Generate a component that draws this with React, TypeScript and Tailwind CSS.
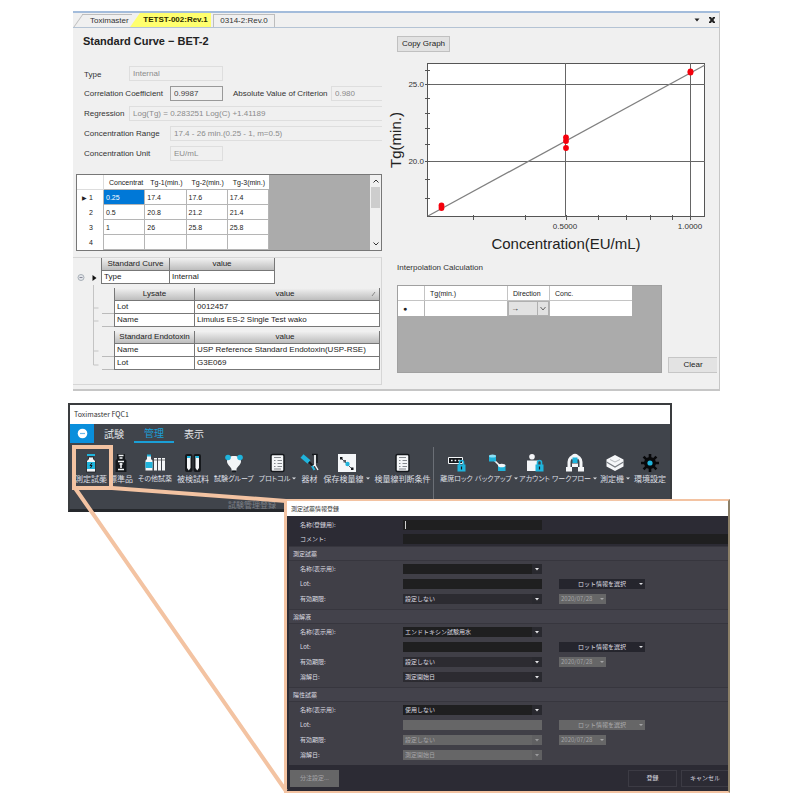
import type { ReactNode } from "react";

const WHITE = "#f4f6f8";
const CYAN = "#1fb4dc";
const BLACK = "#15181c";

/* ---------- Standard curve window ---------- */

function DocumentTabs() {
  return (
    <div className="flex h-[15px] items-end border-b border-[#b4c3d4] pl-[9px] text-[8px] leading-none">
      <button className="relative h-[13px] w-[50px] border-t border-[#bdbdbd] text-left text-[#333] before:absolute before:-left-1 before:-top-px before:h-[13px] before:w-2 before:-skew-x-[35deg] before:border-l before:border-t before:border-[#bdbdbd]">
        <span className="pl-2">Toximaster</span>
      </button>
      <button className="relative ml-2 h-[14px] w-[71px] bg-[#ffff6e] text-center font-bold text-[#2b2b00] before:absolute before:-left-[5px] before:top-0 before:h-[14px] before:w-[10px] before:-skew-x-[35deg] before:bg-[#ffff6e]">
        <span className="relative">TETST-002:Rev.1</span>
      </button>
      <button className="ml-0.5 h-[13px] w-[62px] border border-b-0 border-[#bdbdbd] text-[#333]">
        0314-2:Rev.0
      </button>
      <div className="flex-1" />
      <div className="flex h-full items-center gap-2 pr-[3px]">
        <button aria-label="Tab list">
          <svg width="6" height="4" viewBox="0 0 6 4">
            <path d="M0.5 0.5h5L3 3.5z" fill="#222" />
          </svg>
        </button>
        <button aria-label="Close tab">
          <svg width="8" height="8" viewBox="0 0 8 8">
            <path d="M1 1h2l1 1.6L5 1h2v1L5.4 4 7 6v1H5L4 5.4 3 7H1V6l1.6-2L1 2z" fill="#222" />
          </svg>
        </button>
      </div>
    </div>
  );
}

const field =
  "h-[15px] min-w-0 border border-[#dedede] bg-[#f0f0f0] px-[3px] text-[8px] leading-none text-[#8b8b8b] outline-none";

function CurveForm() {
  return (
    <div className="mt-3 pl-[11px] text-[8px] leading-none text-[#333]">
      <div className="flex h-5 items-center">
        <label htmlFor="type" className="w-[45px] pt-1">Type</label>
        <input id="type" readOnly defaultValue="Internal" className={`${field} w-[94px]`} />
      </div>
      <div className="flex h-5 items-center">
        <label htmlFor="coef" className="w-[86px] pt-0.5">Correlation Coefficient</label>
        <input
          id="coef"
          readOnly
          defaultValue="0.9987"
          className="h-[15px] w-[53px] border border-[#999] bg-[#f0f0f0] px-[3px] text-[8px] leading-none text-[#444] outline-none"
        />
        <label htmlFor="crit" className="w-[108px] flex-none whitespace-nowrap pl-[10px] pt-0.5">
          Absolute Value of Criterion
        </label>
        <input id="crit" readOnly defaultValue="0.980" className={`${field} flex-1 border-r-0`} />
      </div>
      <div className="flex h-5 items-center">
        <label htmlFor="reg" className="w-[45px] pt-0.5">Regression</label>
        <input
          id="reg"
          readOnly
          defaultValue="Log(Tg) = 0.283251 Log(C) +1.41189"
          className={`${field} flex-1 border-r-0`}
        />
      </div>
      <div className="flex h-5 items-center">
        <label htmlFor="range" className="w-[86px] pt-0.5">Concentration Range</label>
        <input
          id="range"
          readOnly
          defaultValue="17.4 - 26 min.(0.25 - 1, m=0.5)"
          className={`${field} flex-1 border-r-0`}
        />
      </div>
      <div className="flex h-5 items-center">
        <label htmlFor="unit" className="w-[86px] pt-0.5">Concentration Unit</label>
        <input id="unit" readOnly defaultValue="EU/mL" className={`${field} w-[53px]`} />
      </div>
    </div>
  );
}

const measurements = [
  ["0.25", "17.4", "17.6", "17.4"],
  ["0.5", "20.8", "21.2", "21.4"],
  ["1", "26", "25.8", "25.8"],
  ["", "", "", ""],
];

function MeasurementGrid() {
  return (
    <div className="ml-[3px] mt-[11px] flex h-[77px] border border-[#777] bg-[#ababab]">
      <table className="w-[192px] flex-none table-fixed border-separate border-spacing-0 bg-white text-[7px] leading-none text-[#222]">
        <thead>
          <tr>
            <th className="h-[15px] w-[27px] border-b border-r border-[#ddd] p-0" />
            {["Concentrat", "Tg-1(min.)", "Tg-2(min.)", "Tg-3(min.)"].map((h) => (
              <th
                key={h}
                className="h-[15px] overflow-hidden whitespace-nowrap border-b border-[#b5b5b5] p-0 pl-[5px] text-left font-normal"
              >
                {h}
              </th>
            ))}
          </tr>
        </thead>
        <tbody>
          {measurements.map((row, r) => (
            <tr key={r}>
              <td className="h-[15px] border-r border-[#b5b5b5] p-0">
                <span className="flex items-center">
                  <span className="w-3 pl-[5px] text-[6px]">{r === 0 && "▶"}</span>
                  {r + 1}
                </span>
              </td>
              {row.map((v, c) => (
                <td
                  key={c}
                  className={`h-[15px] border-b border-r border-[#b5b5b5] p-0 pl-0.5 ${
                    r === 0 && c === 0 ? "bg-[#0078d7] text-white" : ""
                  }`}
                >
                  {v}
                </td>
              ))}
            </tr>
          ))}
        </tbody>
      </table>
      <div className="flex-1" />
      <div className="flex w-[11px] flex-col items-center bg-[#f0f0f0] py-1">
        <svg className="flex-none" width="6" height="4" viewBox="0 0 6 4">
          <path d="M0.5 3.5 3 1l2.5 2.5" fill="none" stroke="#333" />
        </svg>
        <div className="mt-1 h-[21px] w-[9px] flex-none bg-[#cdcdcd]" />
        <div className="flex-1" />
        <svg className="flex-none" width="6" height="4" viewBox="0 0 6 4">
          <path d="M0.5 0.5 3 3l2.5-2.5" fill="none" stroke="#333" />
        </svg>
      </div>
    </div>
  );
}

const th =
  "h-[13px] border-b border-r border-[#777] bg-linear-to-b from-[#f2f2f2] to-[#bdbdbd] p-0 text-center font-normal";
const td = "h-[13px] border-b border-r border-[#777] bg-white p-0 pl-0.5 whitespace-nowrap";

function DetailTable({ name, rows, sorted }: { name: string; rows: string[][]; sorted?: boolean }) {
  return (
    <div className="ml-[29px] mt-1 flex">
      <div className="mt-[13px] w-3 border-b border-[#bbb]">
        <div className="h-[13px] border-b border-[#bbb]" />
      </div>
      <table className="flex-1 table-fixed border-separate border-spacing-0 border-l border-[#777]">
        <thead>
          <tr>
            <th className={`${th} w-[80px]`}>{name}</th>
            <th className={th}>
              <span className="flex items-center">
                <span className="flex-1 pl-1">value</span>
                <svg width="8" height="6" viewBox="0 0 8 6">
                  {sorted && <path d="m1 5 3-4" stroke="#888" />}
                </svg>
              </span>
            </th>
          </tr>
        </thead>
        <tbody>
          {rows.map(([k, v]) => (
            <tr key={k}>
              <td className={td}>{k}</td>
              <td className={td}>{v}</td>
            </tr>
          ))}
        </tbody>
      </table>
    </div>
  );
}

function DetailTree() {
  return (
    <div className="relative mt-1.5 h-[128px] border border-l-0 border-[#d6d6d6] pr-px text-[8px] leading-none text-[#222]">
      <svg className="absolute left-0 top-0" width="30" height="120" viewBox="0 0 30 120">
        <circle cx="8" cy="19.5" r="3" fill="#e3e6ea" stroke="#a9b0b8" />
        <path d="M6.5 19.5h3" stroke="#889" />
        <path d="M19.5 17v6l4-3z" fill="#111" />
        <path d="M20.5 27v80M20.5 50h5M20.5 63h5M20.5 93h5M20.5 107h5" fill="none" stroke="#c4c4c4" />
      </svg>
      <table className="ml-[28px] w-[174px] table-fixed border-separate border-spacing-0 border-l border-[#777]">
        <thead>
          <tr>
            <th className={`${th} w-[68px]`}>Standard Curve</th>
            <th className={th}>value</th>
          </tr>
        </thead>
        <tbody>
          <tr>
            <td className={td}>Type</td>
            <td className={td}>Internal</td>
          </tr>
        </tbody>
      </table>
      <DetailTable
        name="Lysate"
        sorted
        rows={[
          ["Lot", "0012457"],
          ["Name", "Limulus ES-2 Single Test wako"],
        ]}
      />
      <DetailTable
        name="Standard Endotoxin"
        rows={[
          ["Name", "USP Reference Standard Endotoxin(USP-RSE)"],
          ["Lot", "G3E069"],
        ]}
      />
    </div>
  );
}

const yTicks = [14, 28, 42, 57, 72, 88, 105, 123, 142];
const xTicks = [89, 141, 182, 214, 242, 266, 288, 306];
const points = [
  [57.5, 149.5],
  [57.5, 152],
  [182, 81.5],
  [182, 85],
  [182, 92],
  [306.5, 15.5],
  [306.5, 16.5],
];

function CurveChart() {
  return (
    <svg className="mt-1 h-[200px] w-[336px]" viewBox="0 0 336 200" fontFamily="Liberation Sans, sans-serif">
      <rect x="43.5" y="7.5" width="277" height="153" fill="#fff" stroke="#555" />
      <path d="M43 28.5h278M43 105.5h278M181.5 7v154M306.5 7v154" stroke="#666" fill="none" />
      {yTicks.map((y) => (
        <path key={y} d={`M41 ${y + 0.5}h5`} stroke="#555" />
      ))}
      {xTicks.map((x) => (
        <path key={x} d={`M${x + 0.5} 159v5`} stroke="#555" />
      ))}
      <path d="M44 160 321 9" stroke="#808080" strokeWidth="1.3" />
      {points.map(([x, y], i) => (
        <circle key={i} cx={x} cy={y} r="2.9" fill="#f5000c" />
      ))}
      <g fontSize="8" fill="#333">
        <text x="40" y="31" textAnchor="end">25.0</text>
        <text x="40" y="108" textAnchor="end">20.0</text>
        <text x="181" y="173" textAnchor="middle">0.5000</text>
        <text x="306" y="173" textAnchor="middle">1.0000</text>
      </g>
      <g fontSize="15" fill="#222" textAnchor="middle">
        <text x="182" y="193">Concentration(EU/mL)</text>
        <text transform="translate(17 84) rotate(-90)">Tg(min.)</text>
      </g>
    </svg>
  );
}

function Interpolation() {
  return (
    <>
      <h2 className="ml-[13px] mt-1.5 h-3 text-[8px] leading-3 text-[#333]">Interpolation Calculation</h2>
      <div className="ml-[13px] mt-[11px] flex items-end gap-1.5">
        <div className="h-[88px] w-[265px] border border-[#a0a0a0] bg-[#ababab]">
          <table className="w-[234px] table-fixed border-separate border-spacing-0 bg-white text-[7px] leading-none text-[#222]">
            <thead>
              <tr>
                <th className="h-[15px] w-[27px] border-b border-r border-[#c4c4c4] p-0" />
                <th className="w-[83px] border-b border-r border-[#c4c4c4] p-0 pl-[5px] text-left font-normal">Tg(min.)</th>
                <th className="w-[42px] border-b border-r border-[#c4c4c4] p-0 pl-[5px] text-left font-normal">Direction</th>
                <th className="border-b border-[#c4c4c4] p-0 pl-[5px] text-left font-normal">Conc.</th>
              </tr>
            </thead>
            <tbody>
              <tr>
                <td className="h-[15px] border-r border-[#b5b5b5] p-0 pl-[5px]">●</td>
                <td className="border-r border-[#b5b5b5] p-0" />
                <td className="border-r border-[#b5b5b5] p-0">
                  <span className="relative block">
                    <select
                      aria-label="Direction"
                      className="block h-[15px] w-full appearance-none border border-[#b0b0b0] bg-[#e2e2e2] pl-0.5 text-[8px] leading-none"
                    >
                      <option>→</option>
                    </select>
                    <svg className="pointer-events-none absolute right-0 top-0" width="12" height="15" viewBox="0 0 12 15">
                      <path d="M0.5 1v13" stroke="#b0b0b0" />
                      <path d="m3.5 6 2.5 3 2.5-3" fill="none" stroke="#666" />
                    </svg>
                  </span>
                </td>
                <td className="p-0" />
              </tr>
            </tbody>
          </table>
        </div>
        <button className="h-4 w-[49px] border border-r-0 border-[#c6c6c6] bg-[#e3e3e3] text-[8px] leading-none text-[#222]">
          Clear
        </button>
      </div>
    </>
  );
}

function StandardCurveWindow() {
  return (
    <section className="ml-[73px] mr-[80px] border-b-2 border-r border-t-2 border-b-[#c6c6c6] border-r-[#c6c6c6] border-t-[#a3bcdb] bg-[#f0f0f0] font-['Liberation_Sans',sans-serif]">
      <DocumentTabs />
      <div className="flex pb-1">
        <div className="w-[309px] flex-none">
          <h1 className="mt-[3px] h-5 pl-[10px] text-[11px] font-bold leading-5 text-[#222]">
            Standard Curve − BET-2
          </h1>
          <CurveForm />
          <MeasurementGrid />
          <DetailTree />
        </div>
        <div className="ml-0.5 min-w-0 flex-1">
          <button className="ml-[13px] mt-2 block h-4 w-[53px] border border-[#c0c0c0] bg-[#e2e2e2] text-[8px] leading-none text-[#222]">
            Copy Graph
          </button>
          <CurveChart />
          <Interpolation />
        </div>
      </div>
    </section>
  );
}

/* ---------- Ribbon ---------- */

function Icon({ children }: { children: ReactNode }) {
  return (
    <svg width="20" height="20" viewBox="0 0 20 20" fill="none">
      {children}
    </svg>
  );
}

const lock = (
  <>
    <path d="M12.5 12V9.5a2 2 0 0 1 4 0V12" stroke={CYAN} strokeWidth="1.6" />
    <rect x="10.5" y="11.5" width="8" height="7" fill={CYAN} />
    <path d="M14.5 13.5v3" stroke={BLACK} strokeWidth="1.2" />
  </>
);

const protocol = (
  <>
    <rect x="3" y="1.5" width="13" height="17" rx="1.5" fill={WHITE} stroke={BLACK} strokeWidth="1.5" />
    <path d="M6 4.5h7M6 7.5h1.5M9.5 7.5H14M6 10.5h1.5M9.5 10.5H14M6 13.5h1.5M9.5 13.5H14M6 16h7" stroke="#85898e" />
  </>
);

const icons: Record<string, ReactNode> = {
  reagent: (
    <>
      <path d="M6 2h8" stroke={CYAN} strokeWidth="2" />
      <path d="M7.5 4h5v2l2 2v11h-9V8l2-2z" fill={WHITE} stroke={BLACK} strokeWidth="0.8" />
      <path d="M6 9h8v7H6z" fill={CYAN} />
      <path d="m11 10-2 2.5h2l-1.5 2.5" stroke={BLACK} />
    </>
  ),
  standard: (
    <>
      <path d="M6 1h8v5l1.5 1.5V19h-11V7.5L6 6z" fill={BLACK} />
      <path d="M7.5 2.5h5M8.5 5h3M7 8.5h6M8.5 11h3M10 10v5M7 16.5h6" stroke={WHITE} strokeWidth="1.6" />
    </>
  ),
  others: (
    <>
      <path d="M2 3h4v3l1.5 1.5v10h-7v-10L2 6z" fill={WHITE} />
      <path d="M2 2.5h4" stroke={CYAN} strokeWidth="2" />
      <path d="M0.5 9h7v6h-7z" fill={CYAN} />
      <path d="M9 5h3v12.5H9zM13 5h3v12.5h-3zM17 5h3v12.5h-3z" fill={WHITE} />
      <path d="M9 7h3M13 7h3M17 7h3" stroke="#777" />
    </>
  ),
  samples: (
    <>
      <rect x="2" y="1" width="7.5" height="18" rx="2" fill={BLACK} />
      <rect x="10.5" y="1" width="7.5" height="18" rx="2" fill={BLACK} />
      <path d="M4 3h3.5v12L5.8 17.5 4 15zM12.5 3H16v12l-1.8 2.5-1.7-2.5z" fill={WHITE} />
      <path d="M4 3h3.5v2H4zM12.5 3H16v2h-3.5z" fill={CYAN} />
    </>
  ),
  group: (
    <>
      <path d="M2 6h16M5 9l5 8 5-8" stroke={BLACK} strokeWidth="2" />
      <path d="M10 3c4 0 7 2 7 5.5 0 3-3.5 5-4.5 7.5v1.5h-5V16C6.500 13.500 3 11.500 3 8.500 3 5 6 3 10 3z" fill={WHITE} />
      <circle cx="4" cy="4.5" r="2.8" fill={CYAN} />
      <circle cx="16" cy="4.5" r="2.8" fill={CYAN} />
      <path d="M8 18.500h4" stroke={BLACK} strokeWidth="1.5" />
    </>
  ),
  protocol,
  criteria: protocol,
  tools: (
    <>
      <path d="m2 3 7 6" stroke={CYAN} strokeWidth="4.5" />
      <path d="m9 9 5 5" stroke={BLACK} strokeWidth="2" />
      <path d="M12 1.500h5V10" stroke={BLACK} strokeWidth="1.5" />
      <path d="M15 2v10" stroke={WHITE} strokeWidth="1.8" />
      <path d="m12 14 3-2 3 5" stroke={WHITE} strokeWidth="1.4" />
      <path d="m12 13 2.500 4" stroke={CYAN} strokeWidth="2" />
    </>
  ),
  curve: (
    <>
      <rect x="1" y="1" width="18" height="18" fill={WHITE} />
      <path d="m3 4 13 13" stroke="#555b62" />
      <rect x="3" y="4" width="2.500" height="2.500" fill={BLACK} />
      <rect x="6.500" y="7" width="2.500" height="2.500" fill="#555b62" />
      <circle cx="10.500" cy="11" r="2.200" fill={CYAN} />
      <rect x="14" y="14.500" width="2.500" height="2.500" fill={BLACK} />
    </>
  ),
  screenLock: (
    <>
      <path d="M1.500 4.500h14v6h-14z" fill={BLACK} stroke={WHITE} />
      <path d="M4 7.500h1.600M7.600 7.500h1.600M11.200 7.500h1.600" stroke={WHITE} strokeWidth="1.6" />
      {lock}
    </>
  ),
  backup: (
    <>
      <path d="m7 7 7 7" stroke={WHITE} strokeWidth="1.6" />
      <path d="M2 2.500h7v6H2zM11 12h7.500v6H11z" fill={CYAN} />
      <ellipse cx="5.500" cy="3" rx="3.500" ry="1.600" fill="#8de0f5" />
      <ellipse cx="14.700" cy="12.500" rx="3.700" ry="1.800" fill={WHITE} />
    </>
  ),
  account: (
    <>
      <circle cx="7" cy="3.800" r="2.800" fill={WHITE} />
      <path d="M2 7.500h11V18H2z" fill={WHITE} />
      {lock}
    </>
  ),
  workflow: (
    <>
      <path d="M4 15V9a6 6 0 0 1 12 0v6" stroke={WHITE} strokeWidth="3" />
      <circle cx="10" cy="4" r="3.200" fill={WHITE} />
      <path d="M7.500 4.500h5V10h-5z" fill={CYAN} />
      <path d="M1 14h6v4.500H1zM13 14h6v4.500h-6zM7 10.500h6V14H7z" fill={WHITE} />
    </>
  ),
  device: (
    <>
      <path d="m10 2 8.500 4.500v7L10 18l-8.500-4.500v-7z" fill={WHITE} />
      <path d="m1.500 9 8.500 5 8.500-5" stroke="#777c82" strokeWidth="1.2" />
      <path d="m5 6.500 5 2.500 5-2.500" stroke="#b5b9bd" />
    </>
  ),
  settings: (
    <>
      <path
        d="M10 1v18M1 10h18M3.600 3.600l12.800 12.800M16.400 3.600 3.600 16.400"
        stroke="#08090b"
        strokeWidth="2.6"
      />
      <circle cx="10" cy="10" r="6" fill="#08090b" />
      <circle cx="10" cy="10" r="2.600" fill={CYAN} />
    </>
  ),
};

interface RibbonItem {
  icon: string;
  label: string;
  size: string;
  menu?: boolean;
}

const manageItems: RibbonItem[] = [
  { icon: "reagent", label: "測定試薬", size: "w-[32px] text-[8px]" },
  { icon: "standard", label: "標準品", size: "w-[28px] text-[8px]" },
  { icon: "others", label: "その他試薬", size: "w-[40px] text-[7px]" },
  { icon: "samples", label: "被検試料", size: "w-[36px] text-[8px]" },
  { icon: "group", label: "試験グループ", size: "w-[46px] text-[7px]" },
  { icon: "protocol", label: "プロトコル", size: "w-[41px] text-[7px]", menu: true },
  { icon: "tools", label: "器材", size: "w-[23px] text-[8px]" },
  { icon: "curve", label: "保存検量線", size: "w-[51px] text-[8px]", menu: true },
  { icon: "criteria", label: "検量線判断条件", size: "w-[61px] text-[8px]" },
];

const systemItems: RibbonItem[] = [
  { icon: "screenLock", label: "離席ロック", size: "w-[37px] text-[7px]" },
  { icon: "backup", label: "バックアップ", size: "w-[43px] text-[7px]", menu: true },
  { icon: "account", label: "アカウント", size: "w-[33px] text-[7px]" },
  { icon: "workflow", label: "ワークフロー", size: "w-[47px] text-[7px]", menu: true },
  { icon: "device", label: "測定機", size: "w-[34px] text-[8px]", menu: true },
  { icon: "settings", label: "環境設定", size: "w-[36px] text-[8px]" },
];

function RibbonButton({ icon, label, size, menu }: RibbonItem) {
  return (
    <button className={`${size} flex flex-none flex-col items-center leading-[11px] text-[#dcdfe3]`}>
      <Icon>{icons[icon]}</Icon>
      <span className="flex items-center gap-0.5 whitespace-nowrap [font-feature-settings:'palt']">
        {label}
        {menu && (
          <svg width="4" height="3" viewBox="0 0 4 3">
            <path d="M0 0.5h4L2 2.5z" fill="#dcdfe3" />
          </svg>
        )}
      </span>
    </button>
  );
}

function RibbonWindow() {
  return (
    <section className="ml-[68px] mr-[128px] h-[109px] border-2 border-b-[3px] border-[#3a3c3f] border-b-[#25282c] bg-[#40444b]">
      <div className="h-[19px] bg-white pl-1 text-[7px] leading-[19px] text-[#333]">Toximaster FQC1</div>
      <nav className="flex h-[19px] text-[10px] leading-[19px] text-[#e4e6e8]">
        <button className="flex w-[24px] items-center justify-center bg-[#0a8fdc]" aria-label="メニュー">
          <svg width="11" height="11" viewBox="0 0 11 11">
            <circle cx="5.5" cy="5.5" r="4.8" fill="#fff" />
            <path d="M3 5.5h5" stroke="#6cb8e8" strokeWidth="1.2" />
          </svg>
        </button>
        <button className="w-10">試験</button>
        <button className="w-10 border-b-2 border-[#1a9fd6] leading-[17px] text-[#1a9fd6]">管理</button>
        <button className="w-10">表示</button>
      </nav>
      <div className="mt-[10px] flex pl-[5px]">
        {manageItems.map((item) => (
          <RibbonButton key={item.label} {...item} />
        ))}
        <div className="-mt-1.5 mr-1 h-[53px] w-px flex-none bg-[#6b6f76]" />
        {systemItems.map((item) => (
          <RibbonButton key={item.label} {...item} />
        ))}
      </div>
      <div className="pl-[158px] text-[8px] leading-[10px] text-[#7c8087]">試験管理登録</div>
    </section>
  );
}

/* ---------- Reagent registration dialog ---------- */

function Arrow({ dim }: { dim?: boolean }) {
  return (
    <svg className="pointer-events-none absolute right-0 top-0" width="10" height="10" viewBox="0 0 10 10">
      <path d="M0 0h10v10H0z" fill={dim ? "#606062" : "#29292f"} />
      <path d="M3 4h4L5 6.5z" fill={dim ? "#9a9a9c" : "#e5e5e8"} />
    </svg>
  );
}

interface RowProps {
  id: string;
  label: string;
  value?: string;
  kind: "select" | "text";
  tone?: "plain" | "soft" | "off";
  side?: "lot" | "date";
}

const tones = {
  plain: "bg-[#1f1f20] text-[#dcdce0]",
  soft: "bg-[#2c2b31] text-[#dcdce0]",
  off: "bg-[#666667] text-[#a5a5a7]",
};

function Row({ id, label, value = "", kind, tone = "plain", side }: RowProps) {
  const off = tone === "off";
  const box = `block h-[10px] w-full appearance-none px-0.5 text-[6px] leading-[10px] outline-none ${tones[tone]}`;
  return (
    <div className="flex h-[15px] items-center pl-[11px]">
      <label htmlFor={id} className="w-[103px]">{label}</label>
      <div className="relative w-[139px]">
        {kind === "select" ? (
          <>
            <select id={id} disabled={off} className={`${box} opacity-100`}>
              <option>{value}</option>
            </select>
            <Arrow dim={off} />
          </>
        ) : (
          <input id={id} disabled={off} defaultValue={value} className={box} />
        )}
      </div>
      {side === "lot" && (
        <button
          disabled={off}
          className={`relative ml-[17px] h-[10px] w-[86px] leading-[10px] ${
            off ? "bg-[#666667] text-[#aaaaac]" : "bg-[#25252d] text-[#dcdce0]"
          }`}
        >
          ロット情報を選択
          <svg className="absolute right-0.5 top-[3px]" width="4" height="4" viewBox="0 0 4 4">
            <path d="M0 1h4L2 3z" fill={off ? "#a5a5a7" : "#dcdce0"} />
          </svg>
        </button>
      )}
      {side === "date" && (
        <div className="relative ml-[17px] w-[47px]">
          <select
            aria-label={`${label}日付`}
            disabled
            className="block h-[10px] w-full appearance-none bg-[#666667] px-0.5 text-[6px] leading-[10px] text-[#a5a5a7] opacity-100"
          >
            <option>2020/07/28</option>
          </select>
          <svg className="pointer-events-none absolute right-0.5 top-[3px]" width="4" height="4" viewBox="0 0 4 4">
            <path d="M0 1h4L2 3z" fill="#a5a5a7" />
          </svg>
        </div>
      )}
    </div>
  );
}

function Group({ title, children }: { title: string; children: ReactNode }) {
  return (
    <fieldset className="pb-[3px]">
      <legend className="block h-[15px] w-full border-y border-[#37363e] bg-[#43424b] pl-1 leading-[13px]">
        {title}
      </legend>
      {children}
    </fieldset>
  );
}

function ReagentDialog() {
  return (
    <section
      role="dialog"
      aria-label="測定試薬情報登録"
      className="relative -mt-[13px] ml-[284px] mr-[70px] border-2 border-l-[3px] border-[#f3c3a2] border-r-[#8c8068] bg-[#2c2b34] text-[6px] leading-[10px] text-[#dcdce0]"
    >
      <div className="h-[15px] bg-white pl-1 leading-[15px] text-[#333]">測定試薬情報登録</div>
      <div className="pl-0.5 pt-0.5">
        <div className="flex h-[14px] items-center pl-[11px]">
          <label htmlFor="reg-name" className="w-[103px]">名称(登録用):</label>
          <div className="flex h-[10px] w-[139px] items-center bg-[#1f1f20] pl-0.5">
            <span className="h-2 w-px bg-[#d0d0d0]" />
            <input id="reg-name" className="h-[10px] min-w-0 flex-1 bg-transparent text-[6px] outline-none" />
          </div>
        </div>
        <div className="flex h-[14px] items-center pl-[11px]">
          <label htmlFor="comment" className="w-[103px]">コメント:</label>
          <input id="comment" className="h-[10px] min-w-0 flex-1 bg-[#1f1f20] text-[6px] outline-none" />
        </div>
      </div>
      <div className="ml-0.5 bg-[#403f47]">
        <Group title="測定試薬">
          <Row id="r-name" label="名称(表示用):" kind="select" />
          <Row id="r-lot" label="Lot:" kind="text" side="lot" />
          <Row id="r-exp" label="有効期限:" kind="select" tone="soft" value="設定しない" side="date" />
        </Group>
        <Group title="溶解液">
          <Row id="s-name" label="名称(表示用):" kind="select" value="エンドトキシン試験用水" />
          <Row id="s-lot" label="Lot:" kind="text" side="lot" />
          <Row id="s-exp" label="有効期限:" kind="select" tone="soft" value="設定しない" side="date" />
          <Row id="s-day" label="溶解日:" kind="select" tone="soft" value="測定開始日" />
        </Group>
        <Group title="陽性試薬">
          <Row id="p-name" label="名称(表示用):" kind="select" value="使用しない" />
          <Row id="p-lot" label="Lot:" kind="text" tone="off" side="lot" />
          <Row id="p-exp" label="有効期限:" kind="select" tone="off" value="設定しない" side="date" />
          <Row id="p-day" label="溶解日:" kind="select" tone="off" value="測定開始日" />
        </Group>
      </div>
      <div className="flex h-[26px] items-center gap-1 pl-[3px]">
        <button disabled className="h-[17px] w-[49px] bg-[#666667] text-[#a5a5a7]">分注設定...</button>
        <div className="flex-1" />
        <button className="h-[17px] w-[49px] border border-[#3c3b44]">登録</button>
        <button className="h-[17px] w-[47px] border border-r-0 border-[#3c3b44]">キャンセル</button>
      </div>
    </section>
  );
}

/** Frame round the 測定試薬 button with leader lines down to its dialog. */
function Callout() {
  return (
    <svg
      className="pointer-events-none absolute left-[68px] top-0"
      width="220"
      height="392"
      viewBox="0 0 220 392"
      fill="none"
      stroke="#f3c3a2"
      strokeWidth="4"
    >
      <rect x="6" y="44" width="37" height="41" />
      <path d="M7 85 218 388M44 85l174 13" />
    </svg>
  );
}

export default function App() {
  return (
    <main className="bg-white pb-2 pt-[11px]">
      <StandardCurveWindow />
      <div className="relative mt-3 font-['Noto_Sans_CJK_JP',sans-serif]">
        <RibbonWindow />
        <ReagentDialog />
        <Callout />
      </div>
    </main>
  );
}
